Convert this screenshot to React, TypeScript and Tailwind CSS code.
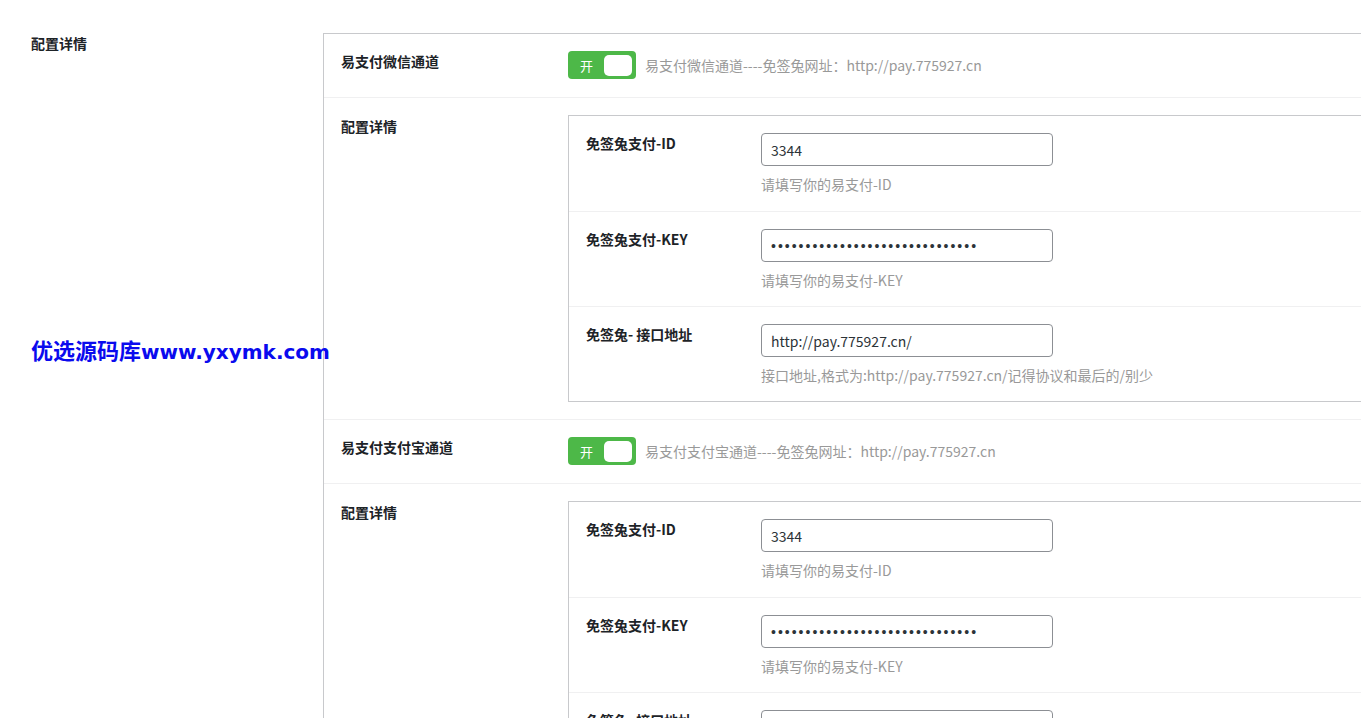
const FONT = "font-['Noto_Sans_CJK_SC','Noto_Sans',sans-serif]";

type Field = {
  label: string;
  value: string;
  help: string;
  password?: boolean;
};

const fields: Field[] = [
  { label: "免签兔支付-ID", value: "3344", help: "请填写你的易支付-ID" },
  {
    label: "免签兔支付-KEY",
    value: "•".repeat(30),
    help: "请填写你的易支付-KEY",
    password: true,
  },
  {
    label: "免签兔- 接口地址",
    value: "http://pay.775927.cn/",
    help: "接口地址,格式为:http://pay.775927.cn/记得协议和最后的/别少",
  },
];

const Toggle = () => (
  <div className="flex h-[28px] w-[68px] shrink-0 items-center justify-between rounded-[4px] bg-[#4db848] pl-[12px] pr-[4px]">
    <span className="text-[13px] leading-none text-white">开</span>
    <span className="h-[21px] w-[28px] rounded-[5px] bg-white" />
  </div>
);

const ChannelRow = ({ title, desc }: { title: string; desc: string }) => (
  <div className="flex border-b border-[#f0f0f1]">
    <div className="w-[244px] shrink-0 pl-[17px] pt-[17px] text-[14px] font-bold leading-[20px] text-[#1d2327]">
      {title}
    </div>
    <div className="flex items-center gap-[9px] pt-[17px] pb-[18px]">
      <Toggle />
      <span className="text-[14px] text-[#999]">{desc}</span>
    </div>
  </div>
);

const ConfigRow = () => (
  <div className="flex border-b border-[#f0f0f1]">
    <div className="w-[244px] shrink-0 pl-[17px] pt-[18px] text-[14px] font-bold leading-[20px] text-[#1d2327]">
      配置详情
    </div>
    <div className="pt-[17px] pb-[17px]">
      <div className="w-[820px] border border-[#c8c9cc]">
        {fields.map((f, i) => (
          <div
            key={f.label}
            className={
              i === 0
                ? "flex border-b border-[#f0f0f1] pt-[17px] pb-[17px]"
                : i < fields.length - 1
                  ? "flex border-b border-[#f0f0f1] pt-[17px] pb-[16px]"
                  : "flex pt-[17px] pb-[16px]"
            }
          >
            <div className="w-[192px] shrink-0 pl-[17px] text-[14px] font-bold leading-[20px] text-[#1d2327]">
              {f.label}
            </div>
            <div className="flex flex-col">
              <input
                readOnly
                value={f.value}
                className={
                  f.password
                    ? "h-[33px] w-[292px] rounded-[4px] border border-[#8c8f94] bg-white px-[9px] font-['Liberation_Sans',sans-serif] text-[14px] tracking-[2px] text-[#2c3338] outline-none"
                    : `h-[33px] w-[292px] rounded-[4px] border border-[#8c8f94] bg-white px-[9px] text-[14px] text-[#2c3338] outline-none ${FONT}`
                }
              />
              <span className="mt-[8px] text-[14px] leading-[20px] text-[#999]">
                {f.help}
              </span>
            </div>
          </div>
        ))}
      </div>
    </div>
  </div>
);

export default function App() {
  return (
    <div
      className={`relative h-[718px] w-[1361px] overflow-hidden bg-white ${FONT}`}
    >
      <div className="flex pt-[33px]">
        <div className="w-[323px] shrink-0 pl-[31px] text-[14px] font-bold leading-[20px] text-[#1d2327]">
          配置详情
        </div>
        <div className="w-[1100px] shrink-0 border-l border-t border-[#c8c9cc]">
          <ChannelRow
            title="易支付微信通道"
            desc="易支付微信通道----免签兔网址：http://pay.775927.cn"
          />
          <ConfigRow />
          <ChannelRow
            title="易支付支付宝通道"
            desc="易支付支付宝通道----免签兔网址：http://pay.775927.cn"
          />
          <ConfigRow />
        </div>
      </div>

      {/* watermark */}
      <div className="absolute left-[31px] top-[335px] whitespace-nowrap font-bold leading-[28px] text-[#0a0aee]">
        <span className="text-[22px]">优选源码库</span>
        <span className="font-['DejaVu_Sans',sans-serif] text-[20px]">
          www.yxymk.com
        </span>
      </div>
    </div>
  );
}
